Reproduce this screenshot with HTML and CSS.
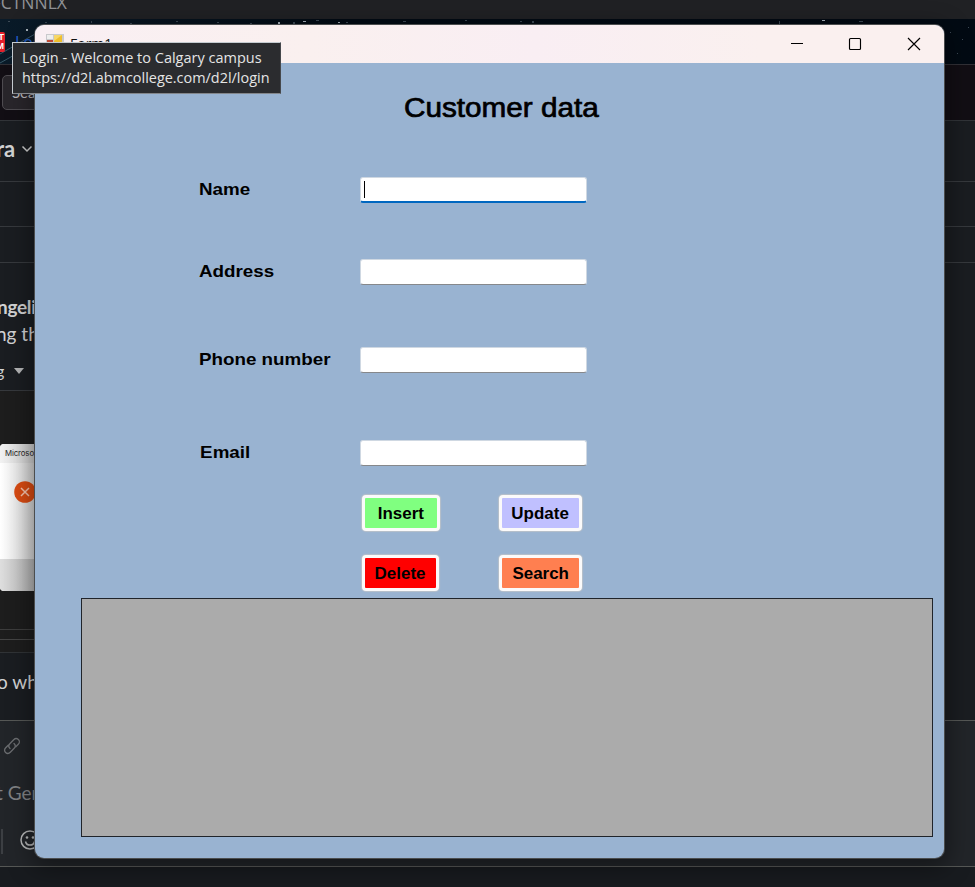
FILE: index.html
```html
<!DOCTYPE html>
<html lang="en">
<head>
<meta charset="utf-8">
<title>Form1</title>
<link rel="stylesheet" href="styles.css">
</head>
<body>
<div class="desktop">
  <div class="row tabs"><span>-CTNNLX</span></div>
  <div class="row bookmarks">
    <svg class="stars" width="975" height="45" viewBox="0 0 975 45">
      <g stroke="#34485b" fill="none"><path d="M0 44L18 34M0 35L35 15" stroke="#385767"/></g>
      <g fill="#a9b4bd"><rect x="26" y="10" width="2" height="2"/><rect x="278" y="3" width="2" height="3"/><rect x="303" y="2" width="3" height="1"/><rect x="338" y="3" width="2" height="1"/><rect x="822" y="1" width="3" height="1"/></g>
      <g fill="#3d4a56"><rect x="8" y="2" width="2" height="1"/><rect x="45" y="3" width="2" height="1"/><rect x="91" y="2" width="1" height="2"/><rect x="130" y="4" width="2" height="1"/><rect x="176" y="2" width="2" height="1"/><rect x="217" y="3" width="2" height="1"/><rect x="250" y="4" width="2" height="1"/><rect x="293" y="3" width="2" height="2"/><rect x="316" y="1" width="3" height="1"/><rect x="346" y="3" width="2" height="1"/><rect x="403" y="2" width="3" height="1"/><rect x="465" y="1" width="2" height="1"/><rect x="520" y="2" width="2" height="1"/><rect x="532" y="2" width="2" height="2"/><rect x="779" y="2" width="1" height="4"/><rect x="859" y="2" width="4" height="1"/><rect x="950" y="13" width="1" height="1"/><rect x="962" y="20" width="1" height="1"/><rect x="957" y="34" width="1" height="1"/><rect x="968" y="8" width="1" height="1"/></g>
    </svg>
    <div class="favicon"><span>T</span><span>M</span></div>
    <span class="link">Log</span>
  </div>
  <div class="row searchbar"><div class="searchbox">Search</div></div>
  <div class="row channel"><span>ra</span><svg width="12" height="8" viewBox="0 0 12 8"><path d="M1.500 1.500L6 6L10.500 1.500" fill="none" stroke="#d0d0d0" stroke-width="1.500"/></svg></div>
  <div class="row band-a"></div>
  <div class="row band-b"></div>
  <div class="row messages">
    <div class="feed">
      <div class="sender">ngeli</div>
      <div class="message">ng th</div>
      <div class="file"><span>g</span><svg width="10" height="6" viewBox="0 0 10 6"><path d="M0 0H10L5 6Z" fill="#b4b5b6"/></svg></div>
      <div class="attachment">
        <div class="dialog">
          <div class="dialog-title">Microsoft</div>
          <div class="dialog-body"><svg width="22" height="22" viewBox="0 0 22 22"><circle cx="11" cy="11" r="10.800" fill="#d94b12"/><path d="M7 7L15 15M15 7L7 15" stroke="#f4c3ad" stroke-width="1.500"/></svg></div>
          <div class="dialog-foot"></div>
        </div>
      </div>
      <div class="rule-gap"></div>
      <div class="rule-low"></div>
      <div class="message reply">o wh</div>
    </div>
  </div>
  <div class="row composer">
    <svg class="chain" width="18" height="18" viewBox="0 0 18 18"><g fill="none" stroke="#6b6d70" stroke-width="1.300" stroke-linecap="round"><path d="M7 11.500C5.300 9.800 5.400 8.100 6.800 6.700L10.700 2.700C12 1.400 14 1.200 15.400 2.500C16.800 3.900 16.700 5.900 15.300 7.300L12.800 9.800"/><path d="M11 6.500C12.700 8.200 12.600 9.900 11.200 11.300L7.300 15.300C6 16.600 4 16.800 2.600 15.500C1.200 14.100 1.300 12.100 2.700 10.700L5.200 8.200"/></g></svg>
    <div class="placeholder">t Gen</div>
    <div class="tools"><i></i><svg width="20" height="20" viewBox="0 0 20 20"><g fill="none" stroke="#b6b7b8" stroke-width="1.500"><circle cx="10" cy="10" r="9"/><path d="M5.500 11.500C6.500 16.300 13.500 16.300 14.500 11.500"/></g><circle cx="7" cy="7.500" r="1.300" fill="#b6b7b8"/><circle cx="13" cy="7.500" r="1.300" fill="#b6b7b8"/></svg></div>
  </div>
  <div class="row bottom"></div>
</div>

<div class="window">
  <header class="titlebar">
    <svg class="app-icon" width="18" height="18" viewBox="0 0 18 18"><path d="M0 0H18V18H0Z" fill="#c9c9cc"/><path d="M1 1H7V5H1Z" fill="#eee"/><path d="M1 6H7V12H1Z" fill="#c24a35"/><path d="M8 1H16V9H8Z" fill="#f0bf2c"/><path d="M8 1H16L8 7Z" fill="#f7d768"/></svg>
    <span class="caption">Form1</span>
    <svg class="controls" width="130" height="14" viewBox="0 0 130 14"><g fill="none" stroke="#000" stroke-width="1.150"><path d="M0 6.500H12"/><rect x="58.500" y="1.500" width="11" height="11" rx="1"/><path d="M117 1L129 13M129 1L117 13"/></g></svg>
  </header>
  <main class="form">
    <h1><span>Customer data</span></h1>
    <div class="field name"><label>Name</label><div class="input focus"><i></i></div></div>
    <div class="field address"><label>Address</label><div class="input"></div></div>
    <div class="field phone"><label>Phone number</label><div class="input"></div></div>
    <div class="field email"><label>Email</label><div class="input"></div></div>
    <div class="buttons">
      <div class="pair"><button class="insert"><span>Insert</span></button><button class="update"><span>Update</span></button></div>
      <div class="pair"><button class="delete"><span>Delete</span></button><button class="search"><span>Search</span></button></div>
    </div>
    <div class="grid"></div>
  </main>
</div>

<div class="tooltip"><div class="tip-title">Login - Welcome to Calgary campus</div><div class="tip-url">https://d2l.abmcollege.com/d2l/login</div></div>
</body>
</html>
```
FILE: styles.css
```css
* { box-sizing: border-box; }
body { margin: 0; width: 975px; height: 887px; overflow: hidden; position: relative; background: #1a1d21; font-family: "Liberation Sans", sans-serif; }
svg { display: block; flex: none; }
.desktop { height: 887px; display: flex; flex-direction: column; font-family: Lato, sans-serif; color: #d1d2d3; }
.row { flex: none; overflow: hidden; white-space: nowrap; }
.tabs { height: 19px; background: #202124; color: #919397; font: 17.500px/20px "Open Sans", sans-serif; }
.tabs span { display: block; margin: -8px 0 0 -5px; }
.bookmarks { height: 45px; background: linear-gradient(90deg, #0a1b29, #020b14 35%, #020a13); position: relative; display: flex; align-items: flex-start; }
.stars { position: absolute; left: 0; top: 0; }
.favicon { position: relative; width: 16px; height: 20px; margin: 13px 0 0 -11px; background: #e3202b; border-radius: 2px; color: #fff; font: bold 9px/9px "Liberation Sans", sans-serif; text-align: right; padding: 1px 1px 0 0; }
.favicon span { display: block; }
.link { position: relative; margin: 12px 0 0 10px; color: #2462d4; font: 16px/22px "Open Sans", sans-serif; }
.searchbar { height: 56px; background: #120e14; border-top: 1px solid #313036; padding: 10px 0 0 2px; }
.searchbox { width: 120px; height: 35px; border: 1px solid #4e4b50; border-radius: 5px; background: #29262b; color: #b9b7ba; font-size: 15px; line-height: 33px; padding-left: 9px; }
.channel { height: 61px; border-top: 1px solid #313438; display: flex; align-items: center; gap: 6px; padding-bottom: 5px; font-weight: 700; font-size: 22px; }
.channel span { margin-left: -4px; }
.band-a { height: 45px; border-top: 1px solid #36393d; }
.band-b { height: 36px; border-top: 1px solid #36393d; }
.messages { height: 458px; border-top: 1px solid #36393d; }
.feed { width: 100px; font-size: 19px; }
.sender { font-weight: 700; margin: 30px 0 0 -3px; line-height: 27px; letter-spacing: -.3px; }
.message { margin-left: -4px; line-height: 27px; }
.file { height: 43px; display: flex; align-items: center; gap: 10px; font-size: 16px; padding-top: 4px; }
.file span { margin-left: -4px; }
.attachment { height: 239px; background: #1d1d1d; border-top: 1px solid #36393d; padding-top: 53px; }
.dialog { height: 147px; background: linear-gradient(90deg, #fff, #d0d0d0 36px); border-radius: 4px; overflow: hidden; }
.dialog-title { height: 19px; background: linear-gradient(90deg, #f2f2f2, #c8c8c8 36px); color: #292929; font: 7.800px/19px Inter, sans-serif; padding-left: 5px; letter-spacing: -.1px; }
.dialog-body { height: 96px; padding: 18px 0 0 14px; }
.dialog-foot { height: 32px; background: linear-gradient(90deg, #dedede, #b0b0b0 36px); }
.rule-gap { height: 10px; background: #1d1d1d; border-top: 1px solid #3d3d3d; }
.rule-low { height: 13px; background: #1d1d1d; border-top: 1px solid #444; }
.reply { border-top: 1px solid #303336; padding-top: 15px; margin-left: 0; text-indent: -3px; }
.composer { height: 146px; background: #222529; border-top: 1px solid #565856; padding: 16px 0 0 3px; }
.placeholder { margin: 25px 0 0 -7px; font-size: 19px; line-height: 26px; color: #808285; }
.tools { display: flex; gap: 17px; margin: 23px 0 0 -2px; }
.tools i { width: 2px; height: 25px; background: #3c3f43; }
.tools svg { margin-top: 1px; }
.bottom { height: 21px; border-top: 1px solid #565856; background: #181b1f; }

.window { position: absolute; left: 35px; top: 25px; width: 909px; height: 833px; border-radius: 9px; overflow: hidden; background: #99b3d1; box-shadow: 0 0 0 1px #4b4d4e, 0 6px 24px 4px rgba(0,0,0,.4); }
.titlebar { height: 38px; background: linear-gradient(90deg, #f9eff3, #faf0ef 30%, #f9eef3 55%, #faf0ef 80%); display: flex; align-items: flex-start; }
.app-icon { margin: 9px 0 0 11px; }
.caption { flex: 1; margin: 9px 0 0 6px; font: 14px/19px "Open Sans", sans-serif; color: #111; }
.controls { margin: 12px 23px 0 0; }
.form { height: 795px; display: flex; flex-direction: column; color: #000; }
h1 { margin: 29px 0 0 369px; font-size: 27px; line-height: 32px; font-weight: 400; -webkit-text-stroke: .7px #000; }
h1 span { display: inline-block; transform: scaleX(1.1); transform-origin: 0 50%; }
.field { flex: none; height: 26px; display: flex; align-items: flex-start; margin-left: 164px; }
.name { margin-top: 53px; }
.address { margin-top: 56px; }
.phone { margin-top: 62px; }
.email { margin-top: 67px; }
.email label { text-indent: 1px; }
.field label { width: 161px; font-size: 17px; line-height: 25px; font-weight: 700; white-space: nowrap; transform: scaleX(1.105); transform-origin: 0 50%; }
.input { flex: none; width: 227px; height: 26px; background: #fff; border: 1px solid #cfd8e2; border-bottom: 1px solid #86888b; border-radius: 3px; }
.focus { border-bottom: 2px solid #0067c0; padding: 3px 0 0 3px; }
.focus i { display: block; width: 1px; height: 17px; background: #000; }
.buttons { margin: 29px 0 0 327px; display: flex; flex-direction: column; gap: 24px; }
.pair { display: flex; }
button { height: 36px; border: 3px solid #fbfafa; border-radius: 4px; padding: 2px 0 0; color: #000; font: bold 16px/28px "Liberation Sans", sans-serif; box-shadow: 0 0 1px 1px #b9c0c9; }
button span { display: inline-block; transform: scaleX(1.06); }
.insert { width: 78px; background: #80ff80; margin-right: 59px; }
.delete { width: 77px; background: #f00; margin-right: 60px; }
.update { width: 83px; background: #c0c0ff; }
.search { width: 83px; background: #ff7f50; }
.grid { width: 852px; height: 239px; margin: 7px 0 0 46px; background: #ababab; border: 1px solid #20242a; }

.tooltip { position: absolute; left: 12px; top: 42px; width: 269px; height: 52px; background: #2b2c2f; border: 1px solid #72757a; border-color: #c5cbd0 #45484c #83868a #c5cbd0; padding: 5px 0 0 9px; color: #e5e5e5; font: 14.500px/20px "Open Sans", sans-serif; white-space: nowrap; }
.tip-url { width: 248px; transform: scaleX(.995); transform-origin: 0 50%; }
```
